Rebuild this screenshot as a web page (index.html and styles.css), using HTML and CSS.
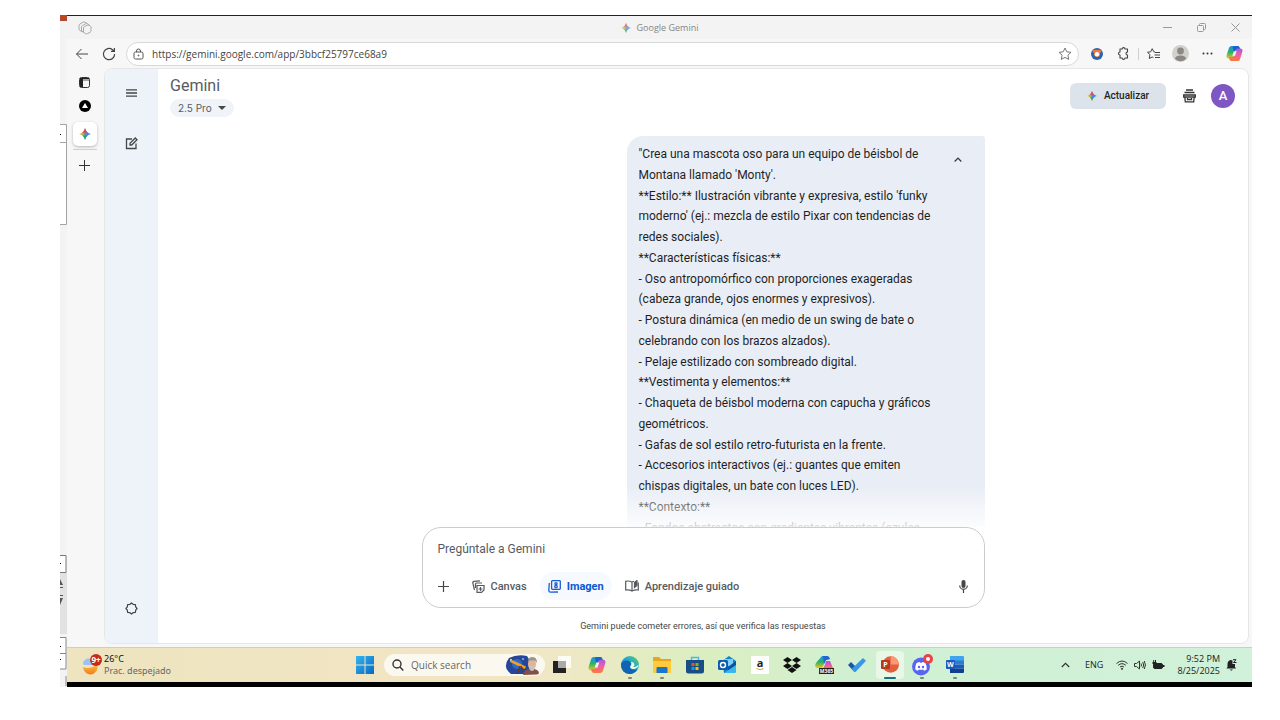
FILE: index.html
```html
<!DOCTYPE html>
<html lang="es">
<head>
<meta charset="utf-8">
<meta name="viewport" content="width=device-width, initial-scale=1">
<title>Google Gemini</title>
<link rel="stylesheet" href="styles.css">
</head>
<body>
<svg class="defs" width="0" height="0" aria-hidden="true">
  <defs>
    <linearGradient id="spark" x1="0" y1="0" x2="1" y2="0"><stop offset="0" stop-color="#f6b91c"/><stop offset=".35" stop-color="#b0b83c"/><stop offset=".5" stop-color="#4a8cf0"/><stop offset="1" stop-color="#2f7cf6"/></linearGradient>
    <linearGradient id="sparkV" x1="0" y1="0" x2="0" y2="1"><stop offset="0" stop-color="#ef4136"/><stop offset=".3" stop-color="#ef4136"/><stop offset=".46" stop-color="#ef4136" stop-opacity="0"/><stop offset=".58" stop-color="#1fa463" stop-opacity="0"/><stop offset=".72" stop-color="#1fa463"/></linearGradient>
    <linearGradient id="copA" x1="0" y1="0" x2="0" y2="1"><stop offset="0" stop-color="#1f8fe8"/><stop offset=".5" stop-color="#27b36b"/><stop offset="1" stop-color="#f5c518"/></linearGradient>
    <linearGradient id="copB" x1="0" y1="0" x2="0" y2="1"><stop offset="0" stop-color="#a259e6"/><stop offset=".5" stop-color="#ee5fa0"/><stop offset="1" stop-color="#fb7a3c"/></linearGradient>
    <linearGradient id="edge" x1="0" y1="1" x2="1" y2="0"><stop offset="0" stop-color="#0c59a4"/><stop offset=".5" stop-color="#1b9de2"/><stop offset="1" stop-color="#5ed45a"/></linearGradient>
    <linearGradient id="win" x1="0" y1="0" x2="1" y2="1"><stop offset="0" stop-color="#35b5f0"/><stop offset="1" stop-color="#0669c4"/></linearGradient>
    <linearGradient id="moon" x1="0" y1="0" x2="0" y2="1"><stop offset="0" stop-color="#ffc447"/><stop offset="1" stop-color="#ef7d17"/></linearGradient>
    <symbol id="i-spark" viewBox="0 0 12 12"><path d="M6 0Q7 5 12 6 7 7 6 12 5 7 0 6 5 5 6 0z" fill="url(#spark)"/><path d="M6 0Q7 5 12 6 7 7 6 12 5 7 0 6 5 5 6 0z" fill="url(#sparkV)"/></symbol>
    <symbol id="i-copilot" viewBox="0 0 18 18"><path d="M6 1h6c1.500 0 2 .8 2.400 2l.6 2h-3c-1.500 0-2.200.8-2.600 2l-1.800 5.500c-.4 1.300-1 1.800-2.300 1.800H3C.8 14.300.1 12.800.7 10.800L3 3.500C3.500 2 4.300 1 6 1z" fill="url(#copA)"/><path d="M8 1h4c1.500 0 2 .8 2.400 2l.6 2h-3c-1.500 0-2.200.8-2.600 2L9 8.500 7.300 4C7 2.500 7.200 1.400 8 1z" fill="#1c62c9"/><path d="M12 17H6c-1.500 0-2-.8-2.400-2L3 13h3c1.500 0 2.200-.8 2.600-2l1.800-5.500c.4-1.300 1-1.800 2.300-1.800H15c2.200 0 2.900 1.500 2.300 3.500L15 14.500c-.5 1.500-1.300 2.500-3 2.500z" fill="url(#copB)"/><path d="M8.300 6.500h3l-1.700 5h-3z" fill="#fff" opacity=".85"/></symbol>
  </defs>
</svg>
<div class="screen">
  <svg class="behind" viewBox="0 0 7 672" width="7" height="672" aria-hidden="true">
    <path fill="#f3f3f3" d="M0 0h7v672H0z"/><path fill="#b7472a" d="M0 0h7v6H0z"/>
    <path fill="#fff" d="M0 109h6v100H0z"/><path d="M0 109.500h6.500V209.500H0M0 127.500h6" fill="none" stroke="#a3a3a3"/><path d="M0 119h1v1H0z"/>
    <path fill="#fff" d="M0 540h6v17H0z"/><path d="M0 540.500h6V557.500H0" fill="none" stroke="#777"/><path d="M0 548h1v1H0z"/>
    <path fill="#e2e2e2" d="M0 558h7v61H0z"/><path d="M0 564l3 6H0zM0 572h3v1H0zM0 580h3v1H0zM0 583h3l-3 7z" fill="#555"/>
    <path fill="#fff" d="M0 622h6v32H0z"/><path d="M0 622.500h6V654H0M0 638.500h6M6 661v10" fill="none" stroke="#888"/><path d="M0 631h1v1H0zM0 644h1v1H0z"/>
  </svg>

  <div class="desktop">
    <div class="browser">
      <header class="titlebar">
        <button class="workspace" aria-label="Espacios"><svg width="14" height="14" viewBox="0 0 14 14" fill="#f3f3f3" stroke="#a8a8a8"><path d="M1 8.500v-4q0-1 1-1.500l3-1.800q1-.6 2 0l2 1.200v5L4 11z"/><path d="M3.500 10V6q0-1 1-1.500l3-1.700q1-.5 2 0l1.500 1v5l-4 3z"/><path d="M5.500 11V7q0-1 1-1.500l2.500-1.300q1-.5 2 0l1 .6q1 .5 1 1.500v3.500q0 1-1 1.500l-2.500 1.300q-1 .5-2 0l-1-.6q-1-.5-1-1z"/></svg></button>
        <div class="title"><svg width="10" height="10" opacity=".7"><use href="#i-spark"/></svg><span>Google Gemini</span></div>
        <div class="win-controls">
          <button aria-label="Minimizar"><svg width="9" height="9"><path d="M0 4.500h9" stroke="#999"/></svg></button>
          <button aria-label="Restaurar"><svg width="9" height="9" fill="none" stroke="#999"><rect x=".5" y="2.500" width="6" height="6" rx="1"/><path d="M2.500 2.500v-1q0-1 1-1h4q1 0 1 1v4q0 1-1 1h-1"/></svg></button>
          <button aria-label="Cerrar"><svg width="9" height="9"><path d="M.5.5l8 8M8.500.5l-8 8" stroke="#999"/></svg></button>
        </div>
      </header>

      <div class="toolbar">
        <button aria-label="Atrás"><svg width="14" height="12" viewBox="0 0 14 12" fill="none" stroke="#444"><path d="M13 6H1.500M6.500 1l-5 5 5 5"/></svg></button>
        <button aria-label="Actualizar página"><svg width="14" height="14" viewBox="0 0 14 14" fill="none" stroke="#444" stroke-width="1.200"><path d="M12.600 7A5.600 5.600 0 1 1 10.500 2.700l1.700 1.500M12.400 1v3.400H9"/></svg></button>
        <div class="address">
          <svg width="11" height="12" viewBox="0 0 11 12" fill="none" stroke="#555"><rect x="1" y="4" width="9" height="7" rx="1.500"/><path d="M3.500 4V3a2 2 0 0 1 4 0v1"/><circle cx="5.500" cy="7.500" r=".5"/></svg>
          <input type="text" aria-label="Dirección" value="https://gemini.google.com/app/3bbcf25797ce68a9">
          <button aria-label="Favorito"><svg width="14" height="14" viewBox="0 0 14 14" fill="none" stroke="#777"><path d="M7 1l1.800 3.800 4.200.5-3.100 2.900.8 4.200L7 10.400l-3.700 2 .8-4.200L1 5.300l4.200-.5z" stroke-linejoin="round"/></svg></button>
        </div>
        <nav class="tools">
          <button aria-label="Extensión"><svg width="12" height="12" viewBox="0 0 12 12"><circle cx="6" cy="6" r="6" fill="#2b62b5"/><path d="M1 2.500Q6 1 11 2.500L8.500 6h-5z" fill="#ef7a3a"/><circle cx="6" cy="6" r="3" fill="#ef7a3a"/><circle cx="6" cy="6.200" r="2.200" fill="#fff"/></svg></button>
          <button aria-label="Extensiones"><svg width="13" height="13" viewBox="0 0 13 13" fill="none" stroke="#444" stroke-width="1.100"><path d="M3 2h2.200a1.400 1.400 0 0 1 2.800 0h2.500v3a1.500 1.500 0 0 0 0 3v3H8a1.400 1.400 0 0 1-2.800 0H3V8a1.500 1.500 0 0 1 0-3z" stroke-linejoin="round"/></svg></button>
          <span class="sep"></span>
          <button aria-label="Favoritos"><svg width="13" height="12" viewBox="0 0 13 12" fill="none" stroke="#444"><path d="M8 4L6.800 3.800 5.200.7 3.700 3.800.5 4.300 2.900 6.600 2.300 10.500 5.200 9 6.500 9.700" stroke-linejoin="round"/><path d="M8 4.500h5M7.500 7h5.500M8 9.500h5"/></svg></button>
          <button aria-label="Perfil"><svg width="17" height="17" viewBox="0 0 17 17"><circle cx="8.500" cy="8.500" r="8.500" fill="#d2d0cd"/><circle cx="8.500" cy="6" r="3.400" fill="#8b8884"/><path d="M3 14q0-3.500 5.500-3.500T14 14q-5.500 4.500-11 0z" fill="#8b8884"/></svg></button>
          <button aria-label="Más"><svg width="11" height="3" fill="#333"><circle cx="1.500" cy="1.500" r="1"/><circle cx="5.500" cy="1.500" r="1"/><circle cx="9.500" cy="1.500" r="1"/></svg></button>
          <button aria-label="Copilot"><svg width="17" height="17"><use href="#i-copilot"/></svg></button>
        </nav>
      </div>

      <div class="content">
        <nav class="tabs">
          <button aria-label="Pestañas"><svg width="11" height="11" viewBox="0 0 11 11"><rect x=".5" y=".5" width="10" height="10" rx="2" fill="none" stroke="#333"/><path d="M1 1h3v9H1zM1 1h9v1H1z" fill="#222"/><path d="M4 3h6" stroke="#555"/></svg></button>
          <button aria-label="Pestaña 1"><svg width="12" height="12" viewBox="0 0 12 12"><circle cx="6" cy="6" r="6"/><path d="M6 3l3 5H3z" fill="#fff"/></svg></button>
          <button class="active" aria-label="Google Gemini"><svg width="12" height="12"><use href="#i-spark"/></svg></button>
          <hr>
          <button aria-label="Nueva pestaña"><svg width="11" height="11"><path d="M5.500 0v11M0 5.500h11" stroke="#333"/></svg></button>
        </nav>

        <div class="page">
          <aside class="side">
            <button aria-label="Menú"><svg width="11" height="8"><path d="M0 .8h11M0 4h11M0 7.200h11" stroke="#444746" stroke-width="1.300"/></svg></button>
            <button aria-label="Nuevo chat"><svg width="13" height="13" viewBox="0 0 13 13" fill="none" stroke="#444746" stroke-width="1.300"><path d="M7 2H1.500v9.500H11V6.500"/><path d="M5 8V6.300L10.300 1l1.700 1.700L6.700 8z"/></svg></button>
            <button class="settings" aria-label="Configuración"><svg width="13" height="13" viewBox="0 0 14 14" fill="none" stroke="#444746" stroke-width="1.300"><path d="M7 1l1.700 1.500 2.500.3.300 2.500L13 7l-1.500 1.700-.3 2.500-2.500.3L7 13l-1.700-1.500-2.500-.3-.3-2.500L1 7l1.500-1.700.3-2.500 2.500-.3z" stroke-linejoin="round"/></svg></button>
          </aside>

          <main class="app">
            <header class="app-head">
              <div class="brand">
                <h1>Gemini</h1>
                <button class="model">2.5 Pro <svg width="8" height="4"><path d="M0 0h8L4 4z" fill="#444746"/></svg></button>
              </div>
              <button class="upgrade"><svg width="10" height="10"><use href="#i-spark"/></svg>Actualizar</button>
              <button class="archive" aria-label="Actividad"><svg width="13" height="14" viewBox="0 0 13 14" fill="none" stroke="#333" stroke-width="1.300"><path d="M3 1h7M1.500 3.500h10M.7 6h11.600v2H.7zM1.800 8l.5 4.800h8.400l.5-4.800M4.500 9v1.500h4V9"/></svg></button>
              <button class="avatar" aria-label="Cuenta">A</button>
            </header>

            <section class="chat">
              <div class="bubble">
                <p>"Crea una mascota oso para un equipo de béisbol de
Montana llamado 'Monty'.
**Estilo:** Ilustración vibrante y expresiva, estilo 'funky
moderno' (ej.: mezcla de estilo Pixar con tendencias de
redes sociales).
**Características físicas:**
- Oso antropomórfico con proporciones exageradas
(cabeza grande, ojos enormes y expresivos).
- Postura dinámica (en medio de un swing de bate o
celebrando con los brazos alzados).
- Pelaje estilizado con sombreado digital.
**Vestimenta y elementos:**
- Chaqueta de béisbol moderna con capucha y gráficos
geométricos.
- Gafas de sol estilo retro-futurista en la frente.
- Accesorios interactivos (ej.: guantes que emiten
chispas digitales, un bate con luces LED).
**Contexto:**
- Fondos abstractos con gradientes vibrantes (azules</p>
                <button aria-label="Contraer"><svg width="8" height="5"><path d="M.7 4.500L4 1.200l3.300 3.300" fill="none" stroke="#333" stroke-width="1.200"/></svg></button>
              </div>
            </section>

            <form class="composer">
              <input type="text" aria-label="Instrucción" placeholder="Pregúntale a Gemini">
              <div class="actions">
                <button type="button" class="add" aria-label="Añadir"><svg width="11" height="11"><path d="M5.500 0v11M0 5.500h11" stroke="#444746" stroke-width="1.200"/></svg></button>
                <button type="button" class="chip"><svg width="13" height="13" viewBox="0 0 13 13" fill="none" stroke="#575b5f" stroke-width="1.200"><path d="M2.500 10L.8 3Q.6 1.500 2 1.300L8 .8M3.500 8V4q0-1 1-1H10"/><path d="M5 5.500h7v4.500L9.500 12.400H5zM8.500 7v4M6.500 9h4"/></svg>Canvas</button>
                <button type="button" class="chip on"><svg width="13" height="13" viewBox="0 0 13 13" fill="none" stroke="#1b5fd0" stroke-width="1.300"><rect x="3.600" y=".7" width="8.700" height="8.700" rx=".8"/><path d="M1.300 3L.8 10.500q0 1.700 1.700 1.700L10 12"/><circle cx="8" cy="3.800" r="1.100"/><circle cx="8" cy="6.600" r="1.300"/></svg>Imagen</button>
                <button type="button" class="chip"><svg width="14" height="12" viewBox="0 0 14 12" fill="none" stroke="#575b5f" stroke-width="1.200"><path d="M7 11V2Q4 .5.700 1.300V10Q4 9.300 7 11q3-1.700 6.300-1V2.500M7 2l2-.7"/><path d="M9.500 7.500V2.500L12 .5v5z" fill="#575b5f"/></svg>Aprendizaje guiado</button>
                <button type="button" class="mic" aria-label="Micrófono"><svg width="9" height="13" viewBox="0 0 9 13"><rect x="2.500" y="0" width="4" height="8" rx="2" fill="#444746"/><path d="M.7 5.500a3.800 3.800 0 0 0 7.600 0M4.500 9.500V13" fill="none" stroke="#444746" stroke-width="1.200"/></svg></button>
              </div>
            </form>
            <p class="notice">Gemini puede cometer errores, así que verifica las respuestas</p>
          </main>
        </div>
      </div>
    </div>

    <footer class="taskbar">
      <button class="weather">
        <svg width="22" height="22" viewBox="0 0 22 22"><path d="M2 13q4 1.500 8 .5 4-1 5-4 3 4 0 8-3 4-8 2.500-4-1.500-5-7z" fill="url(#moon)"/><path d="M3 11a3 3 0 0 1 1-5 4 4 0 0 1 7 1 2.500 2.500 0 0 1 0 4z" fill="#9cc4f2"/><circle cx="15" cy="6" r="6" fill="#c42b1c"/><text x="15" y="9" class="badge-text">9+</text></svg>
        <span><b>26°C</b><small>Prac. despejado</small></span>
      </button>

      <div class="dock">
        <button class="start" aria-label="Inicio"><svg width="18" height="18" viewBox="0 0 18 18" fill="url(#win)"><path d="M0 0h8.500v8.500H0zM9.500 0H18v8.500H9.500zM0 9.500h8.500V18H0zM9.500 9.500H18V18H9.500z"/></svg></button>
        <label class="search">
          <svg width="12" height="12" viewBox="0 0 12 12" fill="none" stroke="#333" stroke-width="1.400"><circle cx="5" cy="5" r="4"/><path d="M8 8l3.300 3.500"/></svg>
          <input type="search" aria-label="Buscar" placeholder="Quick search">
          <svg width="36" height="20" viewBox="0 0 36 20"><path d="M4 3Q12-1 22 1l5 8-2 10H6Q-3 12 4 3z" fill="#24479a"/><circle cx="12" cy="9" r="5" fill="#3468c5"/><circle cx="6" cy="5" r="1" fill="#fff"/><circle cx="18" cy="4" r=".8" fill="#fff"/><path d="M6 4.500l15 7-1.200 2.500L5 7z" fill="#e9a32d"/><path d="M15 11l-3 8M16 11l4 8" stroke="#6c3517" stroke-width="1.200"/><path d="M18 20q1-6 8-6.500 8 .5 8 5l-2 1z" fill="#815249"/><ellipse cx="27" cy="9" rx="4" ry="5.500" fill="#e6b294"/><path d="M23 7q0-5 4.500-5T32 8l-2-2.500h-5z" fill="#9b9490"/><path d="M23.500 11q3-1.500 7 0-1 5-3.500 5t-3.500-5z" fill="#c9c2bc"/></svg>
        </label>
        <button class="view" aria-label="Vista de tareas"><svg width="18" height="17" viewBox="0 0 18 17"><path d="M0 5h13v12H0z" fill="#222"/><path d="M5 0h13v12H5z" fill="#fff" opacity=".8"/><path d="M5 5h8v7H5z" fill="#aaa"/></svg></button>
        <div class="pinned">
          <button aria-label="Copilot"><svg width="18" height="18"><use href="#i-copilot"/></svg></button>
          <button class="run" aria-label="Edge"><svg width="18" height="18" viewBox="0 0 18 18"><circle cx="9" cy="9" r="9" fill="url(#edge)"/><path d="M0 8q3-5 8-3 3 1.500 1.500 5-1.500 2.500 2 3.500 3 .5 5-.5-3 5-8 5Q0 17.500 0 8z" fill="#1164b4"/><path d="M9.500 10q1.700-2 .5-4.200 3 .2 3.500 2.700 0 2-1.500 2.500 3 .5 5.800-2.500-.3 3-3 4-3.800 1.300-5.300-.5-.9-1 0-2z" fill="#eef7db"/></svg></button>
          <button class="run" aria-label="Explorador"><svg width="18" height="17" viewBox="0 0 18 17"><path d="M0 1h6l2 2h10v13H0z" fill="#e9a51b"/><path d="M0 5h18v12H0z" fill="#ffcb3d"/><path d="M3.500 12q0-1 1-1h9q1 0 1 1v5h-11z" fill="#1976c9"/></svg></button>
          <button aria-label="Store"><svg width="18" height="18" viewBox="0 0 18 18"><path d="M5.500 5V1.500h7V5" fill="none" stroke="#4bb8e8" stroke-width="1.500"/><path d="M0 4h18v11q0 2.500-2.500 2.500h-13Q0 17.500 0 15z" fill="#184d85"/><path d="M5.500 7h3v3h-3z" fill="#f25022"/><path d="M9.500 7h3v3h-3z" fill="#7fba00"/><path d="M5.500 11h3v3h-3z" fill="#00a4ef"/><path d="M9.500 11h3v3h-3z" fill="#ffb900"/></svg></button>
          <button aria-label="Outlook"><svg width="18" height="17" viewBox="0 0 18 17"><path d="M4 5l7-5 7 5v10q0 2-2 2H6z" fill="#1682cf"/><path d="M6 3h9v7H6z" fill="#77d2f5"/><path d="M10 11l8-6v5l-8 5z" fill="#0f4f9c"/><path d="M6 17l12-8v6q0 2-2 2z" fill="#37b8ee"/><rect y="4" width="10" height="10" rx="1.500" fill="#0b5cab"/><circle cx="5" cy="9" r="2.500" fill="none" stroke="#fff" stroke-width="1.400"/></svg></button>
          <button aria-label="Amazon"><svg width="18" height="18" viewBox="0 0 18 18"><path d="M0 0h18v18H0z" fill="#fff"/><text x="9" y="11" class="amazon">a</text><path d="M5.500 12.500q3.500 2.500 7 0" fill="none" stroke="#f39a1d"/></svg></button>
          <button aria-label="Dropbox"><svg width="18" height="16" viewBox="0 0 18 16" fill="#111"><path d="M4.500 0L9 3 4.500 6 0 3zM13.500 0L18 3l-4.500 3L9 3zM4.500 6L9 9l-4.500 3L0 9zM13.500 6L18 9l-4.500 3L9 9zM9 10l4.500 3L9 16l-4.500-3z"/></svg></button>
          <button aria-label="Microsoft 365"><svg width="19" height="18" viewBox="0 0 19 18"><path d="M7 0h5q2 0 3 3l-4 1-4 8H2Q-1 11 1 7z" fill="url(#copA)"/><path d="M8 0h4q2 0 3 3l-4 1-2 4z" fill="#2465d3"/><path d="M11 5h4l3 7q0 2-3 2H6q3-1 5-9z" fill="url(#copB)"/><path d="M4 12h15v6H4z" fill="#222"/><text x="11.500" y="17" class="m365">M365</text></svg></button>
          <button aria-label="To Do"><svg width="18" height="14" viewBox="0 0 18 14"><path d="M0 7l3-3 6 6-3 3.500z" fill="#1a56a8"/><path d="M6 13.500L3.500 11 15 0l3 2.800L8 13.500q-1 1-2 0z" fill="#3a96e8"/></svg></button>
          <button class="run current" aria-label="PowerPoint"><svg width="18" height="17" viewBox="0 0 18 17"><circle cx="9.700" cy="8.500" r="8.300" fill="#e0603d"/><path d="M9.700.2A8.300 8.300 0 0 1 18 8.500H9.700z" fill="#ff9572"/><rect y="4" width="9" height="9" rx="1" fill="#b7381d"/><text x="4.500" y="11" class="tile-letter">P</text></svg></button>
          <button class="run" aria-label="Discord"><svg width="22" height="22" viewBox="0 0 22 22"><circle cx="10" cy="12.500" r="9" fill="#5865f2"/><path d="M5.500 9q2-1 3-1l.5.700h2l.5-.7q1 0 3 1 1.500 3 1.200 6.500-1.500 1-2.700 1.200l-.7-1.200q-2.300.7-4.600 0L7 16.700Q5.500 16.500 4.300 15.500 4 12 5.500 9z" fill="#fff"/><ellipse cx="8" cy="13" rx="1.200" ry="1.300" fill="#5865f2"/><ellipse cx="12" cy="13" rx="1.200" ry="1.300" fill="#5865f2"/><circle cx="17" cy="5" r="5" fill="#ed4245"/><circle cx="17" cy="5" r="2" fill="#fff"/></svg></button>
          <button class="run" aria-label="Word"><svg width="18" height="17" viewBox="0 0 18 17"><path d="M4 0h13q1 0 1 1v4H4z" fill="#41a5ee"/><path d="M4 4.500h14v4H4z" fill="#2b7cd3"/><path d="M4 8.500h14v4H4z" fill="#185abd"/><path d="M4 12.500h14V16q0 1-1 1H4z" fill="#103f91"/><rect y="4" width="9" height="9" rx="1" fill="#185abd"/><text x="4.500" y="11" class="tile-letter">W</text></svg></button>
        </div>
      </div>

      <div class="tray">
        <button aria-label="Iconos ocultos"><svg width="9" height="6"><path d="M.8 5l3.700-3.700L8.200 5" fill="none" stroke="#333" stroke-width="1.200"/></svg></button>
        <button class="lang">ENG</button>
        <button class="status" aria-label="Red, sonido y batería">
          <svg width="12" height="10" viewBox="0 0 12 10" fill="none" stroke="#333"><path d="M.5 3.500Q6-1.500 11.500 3.500M2.200 5.300q3.800-3.300 7.600 0M4 7q2-1.700 4 0"/><circle cx="6" cy="8.800" r=".6" fill="#333"/></svg>
          <svg width="12" height="10" viewBox="0 0 12 10" fill="none" stroke="#333"><path d="M.5 3.500h2L5.500 1v8l-3-2.500h-2zM7 3.500q1 1.500 0 3M8.700 2q2 3 0 6M10.300 1q2.200 4 0 8"/></svg>
          <svg width="13" height="10" viewBox="0 0 13 10"><rect x="1.500" y="3.500" width="9" height="5" rx="1.500" fill="#222" stroke="#222"/><path d="M11 5h1.500v2H11zM.5 4V2h4v2zM1.200 0h1v2h-1zM3 0h1v2H3z" fill="#222"/></svg>
        </button>
        <button class="clock"><time>9:52 PM</time><time>8/25/2025</time></button>
        <button aria-label="Notificaciones"><svg width="11" height="12" viewBox="0 0 11 12"><path d="M1.500 8V5a3.500 3.500 0 0 1 5-3.500V5H9v3l1 1.500H.5zM3.500 10.500h3.500l-1.700 1.300z" fill="#222"/><path d="M7 .7h3L7.500 3.500h3" fill="none" stroke="#222"/></svg></button>
      </div>
    </footer>
  </div>
</div>
</body>
</html>
```
FILE: styles.css
```css
* { box-sizing: border-box; }
body {
  margin: 0;
  min-height: 100vh;
  display: flex;
  padding: 15px 28px 33px 60px;
  background: #fff;
  font-family: "Open Sans", "Noto Sans", sans-serif;
  font-size: 10px;
  color: #1f1f1f;
}
button, input { font: inherit; color: inherit; border: 0; background: none; padding: 0; margin: 0; min-width: 0; }
button { display: flex; align-items: center; justify-content: center; }
input { outline: 0; }
svg { display: block; flex: none; }
p, h1 { margin: 0; }
.defs { position: absolute; }

.screen { flex: 1; display: flex; min-width: 0; }
.desktop { flex: 1; min-width: 0; display: flex; flex-direction: column; border-bottom: 5px solid #000; }
.browser { flex: 1; display: flex; flex-direction: column; border-top: 1px solid #222; background: #f7f7f7; padding-bottom: 3px; }

.titlebar { display: grid; grid-template-columns: 1fr auto 1fr; align-items: center; height: 23px; background: #f3f3f3; }
.workspace { width: 36px; }
.title { display: flex; align-items: center; gap: 6px; font-size: 9px; color: #858585; }
.win-controls { display: flex; justify-content: flex-end; }
.win-controls button { width: 34px; height: 23px; }

.toolbar { display: flex; align-items: center; height: 29px; padding: 0 4px 0 1px; color: #444; }
.toolbar > button { width: 27px; height: 24px; }
.address { flex: 1; display: flex; align-items: center; height: 24px; margin: 0 4px; padding: 0 6px; gap: 8px; border: 1px solid #d8d8d8; border-radius: 12px; background: #fff; }
.address input { flex: 1; }
.tools { display: flex; align-items: center; }
.tools button { width: 27px; height: 24px; }
.sep { width: 1px; height: 12px; margin: 0 1px; background: #d0d0d0; }

.content { flex: 1; display: flex; padding-right: 3px; }
.tabs { width: 37px; display: flex; flex-direction: column; align-items: center; padding: 2px 2px 0 0; }
.tabs button { width: 24px; height: 24px; }
.tabs .active { margin-top: 4px; border-radius: 5px; background: #fff; box-shadow: 0 1px 3px #0004; }
.tabs hr { width: 24px; margin: 3px 0; border: 0; border-top: 1px solid #d0d0d0; }

.page { flex: 1; display: flex; min-width: 0; border: 1px solid #e6e6e6; border-radius: 8px; background: #fff; overflow: hidden; }
.side { width: 53px; display: flex; flex-direction: column; align-items: center; padding: 12px 0 23px; gap: 26px; background: #eef2f9; }
.side button { width: 24px; height: 24px; }
.side .settings { margin-top: auto; }

.app { flex: 1; min-width: 0; display: flex; flex-direction: column; align-items: center; color: #444746; }
.app-head { align-self: stretch; display: flex; align-items: center; height: 54px; padding: 0 13px 0 12px; font-family: Inter, sans-serif; }
.brand { flex: 1; display: flex; flex-direction: column; align-items: flex-start; gap: 3px; }
.brand h1 { font: 400 16px/20px Roboto, sans-serif; color: #575b5f; }
.model { gap: 6px; height: 18px; padding: 0 8px; border-radius: 9px; background: #f0f4f9; color: #575b5f; }
.upgrade { gap: 7px; width: 96px; height: 26px; border-radius: 6px; background: #dde3ea; font: 500 10px/16px Roboto, sans-serif; color: #1f1f1f; }
.archive { width: 28px; height: 24px; margin: 0 8px 0 9px; }
.avatar { width: 24px; height: 24px; border-radius: 50%; background: #7e57c2; color: #fff; font: 500 13px/24px Roboto, sans-serif; }

.chat { flex: 1 1 0; min-height: 0; width: 563px; max-width: 100%; display: flex; justify-content: flex-end; align-items: flex-start; padding-top: 13px; overflow: hidden; }
.bubble { position: relative; width: 358px; height: 100%; display: flex; align-items: flex-start; justify-content: space-between; padding: 8px 18px 0 12px; border-radius: 16px 3px 0 0; background: #e9eef6; overflow: hidden; color: #1f1f1f; }
.bubble::after { content: ""; position: absolute; inset: auto 0 0; height: 40px; background: linear-gradient(#fff0, #ffffffd9); }
.bubble p { white-space: pre; font-family: Roboto, sans-serif; font-size: 12px; line-height: 1.73; }
.bubble button { width: 18px; height: 18px; margin-top: 6px; }

.composer { width: 563px; max-width: 100%; height: 81px; padding: 11px 14px 0 15px; border: 1px solid #ccc; border-radius: 19px; background: #fff; font-family: Roboto, sans-serif; }
.composer > input { width: 100%; height: 20px; font-size: 12px; }
.composer input::placeholder { color: #575b5f; opacity: 1; }
.actions { display: flex; align-items: center; height: 28px; margin-top: 13px; }
.add { width: 12px; height: 28px; margin-right: 14px; }
.chip { gap: 6px; height: 28px; padding: 0 8px; border-radius: 14px; font-size: 11px; font-weight: 500; color: #575b5f; }
.on { background: #f6f9fe; color: #0b57d0; font-weight: 700; margin: 0 5px; }
.mic { width: 12px; height: 28px; margin-left: auto; }
.notice { font: 400 9px/12px Roboto, sans-serif; padding: 12px 0 11px; }

.taskbar { display: grid; grid-template-columns: 1fr auto 1fr; align-items: center; height: 35px; padding-bottom: 1px; border-top: 1px solid #ccc; background: linear-gradient(90deg, #eee4bf, #f1e5c4 32%, #efe8c5 42%, #dceebf 53%, #d1f0d2 66%, #d0f1da); }
.weather { justify-self: start; gap: 1px; padding-left: 14px; text-align: left; color: #333; }
.weather span { display: grid; font-family: "Noto Sans", sans-serif; font-size: 9px; line-height: 12px; }
.weather b { font-weight: 400; color: #111; }
.weather small { font-size: 9px; color: #666; }
.dock { display: flex; align-items: center; }
.start { width: 34px; height: 32px; }
.search { display: flex; align-items: center; width: 161px; height: 22px; margin: 0 4px 0 2px; padding: 0 4px 0 8px; gap: 7px; border-radius: 11px; background: #fbf9ef; }
.search input { flex: 1; width: 60px; }
.search input::placeholder { color: #666; opacity: 1; }
.view { width: 26px; height: 28px; margin-right: 6px; }
.pinned { display: grid; grid-template-columns: repeat(12, 1fr); width: 390px; justify-items: center; }
.pinned button { position: relative; width: 28px; height: 28px; border-radius: 4px; }
.run::after { content: ""; position: absolute; bottom: 0; left: 12px; width: 4px; height: 2px; border-radius: 1px; background: #7d8580; }
.current { background: #e9f7e8; }
.current::after { left: 8px; width: 12px; background: #16727c; }
.tray { justify-self: end; display: flex; align-items: center; padding-right: 13px; color: #222; font-size: 9px; line-height: 12px; }
.tray button { min-width: 16px; height: 28px; }
.tray .lang { margin: 0 13px 0 12px; }
.status { gap: 6px; }
.tray .clock { flex-direction: column; align-items: flex-end; margin: 0 3px 0 12px; }

svg text { text-anchor: middle; font-weight: 700; fill: #fff; }
.badge-text { font-size: 8px; }
svg .amazon { font-size: 11px; fill: #222; }
.m365 { font-size: 5px; }
.tile-letter { font-size: 7px; }
```
